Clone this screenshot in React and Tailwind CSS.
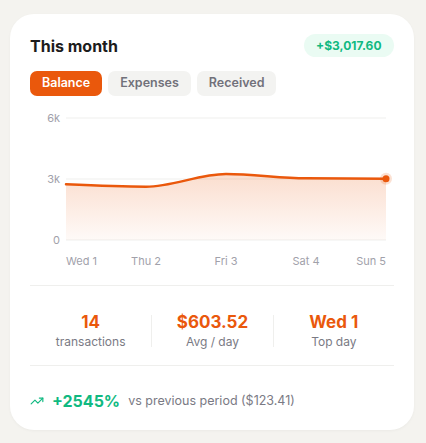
import { TrendingUp } from "lucide-react";

const pts = [
  [36, 76.3],
  [116, 78.7],
  [196, 66],
  [276, 70.3],
  [356, 70.7],
];

const linePath =
  "M36,76.3 C62.67,77.5 89.33,78.7 116,78.7 C142.67,78.7 169.33,66 196,66 C222.67,66 249.33,70.03 276,70.3 C302.67,70.57 329.33,70.63 356,70.7";

const stats = [
  ["14", "transactions"],
  ["$603.52", "Avg / day"],
  ["Wed 1", "Top day"],
];

function Chart() {
  const last = pts[pts.length - 1];
  return (
    <svg width="364" height="162" viewBox="0 0 364 162" className="mt-3 block">
      <defs>
        <linearGradient id="fill" x1="0" y1="0" x2="0" y2="1">
          <stop offset="0%" stopColor="#ea580c" stopOpacity="0.2" />
          <stop offset="100%" stopColor="#ea580c" stopOpacity="0.03" />
        </linearGradient>
      </defs>
      {[10, 71, 132].map((y) => (
        <line key={y} x1="36" x2="356" y1={y} y2={y} stroke="#efefed" strokeWidth="1" />
      ))}
      <g fill="#a1a1aa" fontSize="11" fontFamily="Inter, sans-serif">
        <text x="30" y="14" textAnchor="end">6k</text>
        <text x="30" y="75" textAnchor="end">3k</text>
        <text x="30" y="136" textAnchor="end">0</text>
        <text x="36" y="157" textAnchor="start">Wed 1</text>
        <text x="116" y="157" textAnchor="middle">Thu 2</text>
        <text x="196" y="157" textAnchor="middle">Fri 3</text>
        <text x="276" y="157" textAnchor="middle">Sat 4</text>
        <text x="356" y="157" textAnchor="end">Sun 5</text>
      </g>
      <path d={`${linePath} L356,132 L36,132 Z`} fill="url(#fill)" />
      <path d={linePath} fill="none" stroke="#ea580c" strokeWidth="2.5" strokeLinecap="round" />
      <circle cx={last[0]} cy={last[1]} r="6" fill="#ea580c" fillOpacity="0.18" />
      <circle cx={last[0]} cy={last[1]} r="3.5" fill="#ea580c" />
    </svg>
  );
}

export default function App() {
  return (
    <div className="min-h-[443px] bg-[#f4f3ef] px-[10px] pt-[14px] font-['Inter',sans-serif]">
      <div className="w-[404px] rounded-[24px] bg-white px-5 pb-[17px] pt-5 shadow-[0_1px_3px_rgba(0,0,0,0.04)]">
        <div className="flex h-[23px] items-center justify-between">
          <div className="text-[16px] font-bold text-[#1c1c1c]">This month</div>
          <div className="flex h-[23px] items-center rounded-full bg-[#eafbf3] px-[12.5px] text-[12px] font-bold text-[#10b981]">
            +$3,017.60
          </div>
        </div>

        <div className="mt-[14px] flex gap-[6px]">
          {["Balance", "Expenses", "Received"].map((t, i) => (
            <button
              key={t}
              className={`h-[25px] rounded-[7px] px-3 text-[12.5px] font-semibold ${
                i === 0 ? "bg-[#ea580c] text-white" : "bg-[#f3f3f1] text-[#71717a]"
              }`}
            >
              {t}
            </button>
          ))}
        </div>

        <Chart />

        <div className="mt-[15px] border-t border-[#efefed]" />
        <div className="flex pb-[14px] pt-[25px]">
          {stats.map(([v, l], i) => (
            <div key={l} className="flex flex-1">
              {i > 0 && <div className="my-1 w-px bg-[#efefed]" />}
              <div className="flex flex-1 flex-col items-center">
                <div className="text-[17px] font-bold leading-[22px] text-[#ea580c]">{v}</div>
                <div className="text-[12px] leading-[18px] text-[#7a7a84]">{l}</div>
              </div>
            </div>
          ))}
        </div>
        <div className="border-t border-[#efefed]" />

        <div className="flex items-center pt-[23px]">
          <TrendingUp size={14} strokeWidth={2} className="text-[#10b981]" />
          <span className="ml-2 text-[16px] font-bold leading-6 text-[#10b981]">+2545%</span>
          <span className="ml-2 text-[12.5px] text-[#7a7a84]">vs previous period ($123.41)</span>
        </div>
      </div>
    </div>
  );
}
